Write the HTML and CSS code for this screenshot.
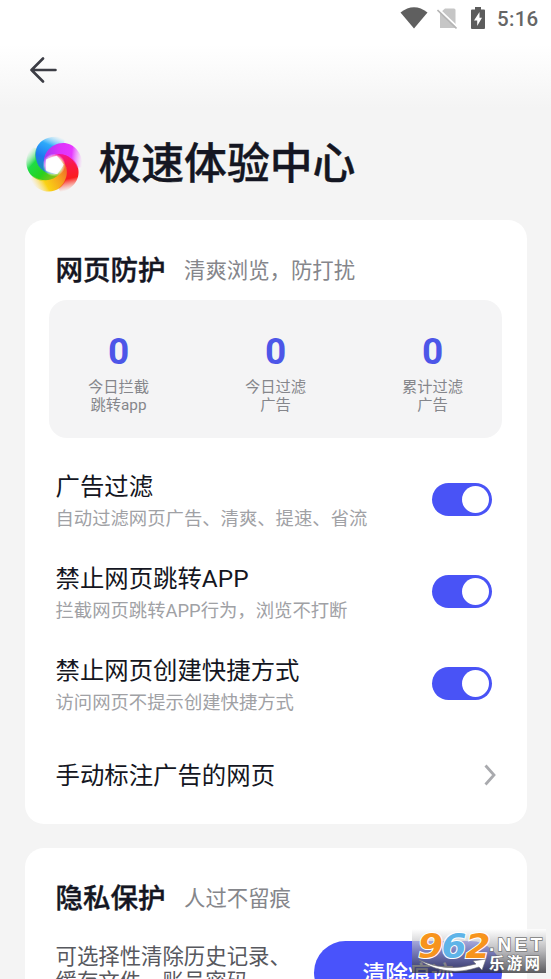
FILE: index.html
```html
<!DOCTYPE html>
<html lang="zh-CN">
<head>
    <meta charset="utf-8">
    <title>极速体验中心</title>
    <link rel="stylesheet" href="styles.css">
</head>
<body>
    <div class="status-bar">
        <svg class="wifi" width="28" height="22" viewBox="0 0 28 22"><path d="M0.500 5.500Q14-5 27.500 5.500L14 21.500Z" fill="#5f5f5f"/></svg>
        <svg class="sim" width="20" height="22" viewBox="0 0 20 22">
            <path d="M8 0.500H17Q18.500 0.500 18.500 2V20H3V5Z" fill="#c6c6c6"/>
            <path d="M1.500 1L20.500 19" stroke="#fff" stroke-width="2"/>
            <path d="M0.500 2L19.500 20.500" stroke="#b5b5b5" stroke-width="1.600"/>
        </svg>
        <svg class="battery" width="14" height="22" viewBox="0 0 14 22">
            <path d="M4 0H10V2.500H13Q14 2.500 14 3.500V21Q14 22 13 22H1Q0 22 0 21V3.500Q0 2.500 1 2.500H4Z" fill="#5c5c5c"/>
            <path d="M8.500 5L3 13.500H6.200V19L11 10.800H8.500Z" fill="#fff"/>
        </svg>
        <span class="time">5:16</span>
    </div>

    <div class="nav">
        <svg width="28" height="26" viewBox="0 0 28 26" fill="none" stroke="#3c3d45" stroke-width="2.600" stroke-linecap="round" stroke-linejoin="round">
            <path d="M14 1.500L2.500 13L14 24.500M2.500 13H26.500"/>
        </svg>
    </div>

    <div class="page-title">
        <svg class="logo" width="60" height="60" viewBox="-30 -30 60 60">
            <defs>
                <linearGradient id="magenta" gradientUnits="userSpaceOnUse" x1="-10" y1="-4" x2="28" y2="0"><stop offset="0" stop-color="#a03cf0"/><stop offset=".35" stop-color="#dc32fa"/><stop offset=".7" stop-color="#e638ff"/><stop offset="1" stop-color="#f08cff" stop-opacity="0"/></linearGradient>
                <linearGradient id="red" gradientUnits="userSpaceOnUse" x1="-10" y1="-4" x2="28" y2="0"><stop offset="0" stop-color="#f514a0"/><stop offset=".35" stop-color="#fa1946"/><stop offset=".7" stop-color="#fa1e1e"/><stop offset="1" stop-color="#ff6e50" stop-opacity="0"/></linearGradient>
                <linearGradient id="yellow" gradientUnits="userSpaceOnUse" x1="-10" y1="-4" x2="28" y2="0"><stop offset="0" stop-color="#f06428"/><stop offset=".35" stop-color="#f5a51e"/><stop offset=".7" stop-color="#fad214"/><stop offset="1" stop-color="#ffdc64" stop-opacity="0"/></linearGradient>
                <linearGradient id="green" gradientUnits="userSpaceOnUse" x1="-10" y1="-4" x2="28" y2="0"><stop offset="0" stop-color="#96be14"/><stop offset=".35" stop-color="#28d21e"/><stop offset=".7" stop-color="#1edc46"/><stop offset="1" stop-color="#82eba0" stop-opacity="0"/></linearGradient>
                <linearGradient id="blue" gradientUnits="userSpaceOnUse" x1="-10" y1="-4" x2="28" y2="0"><stop offset="0" stop-color="#1e8cb4"/><stop offset=".35" stop-color="#1e78f0"/><stop offset=".7" stop-color="#2daafa"/><stop offset="1" stop-color="#6ed2ff" stop-opacity="0"/></linearGradient>
                <radialGradient id="core"><stop offset=".6" stop-color="#fff"/><stop offset="1" stop-color="#fff" stop-opacity="0"/></radialGradient>
                <path id="blade" d="M-8 6C-15-10-3-22 9-22C20-22 29-12 28.500 2L23.400 3C19.500-9.200 4.700-16.700-8-5.300Z"/>
            </defs>
            <use href="#blade" fill="url(#blue)" transform="rotate(288)"/>
            <use href="#blade" fill="url(#green)" transform="rotate(216)"/>
            <use href="#blade" fill="url(#yellow)" transform="rotate(144)"/>
            <use href="#blade" fill="url(#red)" transform="rotate(72)"/>
            <use href="#blade" fill="url(#magenta)"/>
            <circle r="11.500" fill="url(#core)"/>
        </svg>
        <h1>极速体验中心</h1>
    </div>

    <div class="card">
        <div class="card-header">
            <h2>网页防护</h2>
            <span>清爽浏览，防打扰</span>
        </div>
        <div class="stats">
            <div class="stat-item">
                <div class="stat-number">0</div>
                <div class="stat-label">今日拦截<br>跳转app</div>
            </div>
            <div class="stat-item">
                <div class="stat-number">0</div>
                <div class="stat-label">今日过滤<br>广告</div>
            </div>
            <div class="stat-item">
                <div class="stat-number">0</div>
                <div class="stat-label">累计过滤<br>广告</div>
            </div>
        </div>
        <div class="settings">
            <div class="setting">
                <div class="setting-text">
                    <h3>广告过滤</h3>
                    <p>自动过滤网页广告、清爽、提速、省流</p>
                </div>
                <div class="toggle"><div class="toggle-slider"></div></div>
            </div>
            <div class="setting">
                <div class="setting-text">
                    <h3>禁止网页跳转APP</h3>
                    <p>拦截网页跳转APP行为，浏览不打断</p>
                </div>
                <div class="toggle"><div class="toggle-slider"></div></div>
            </div>
            <div class="setting">
                <div class="setting-text">
                    <h3>禁止网页创建快捷方式</h3>
                    <p>访问网页不提示创建快捷方式</p>
                </div>
                <div class="toggle"><div class="toggle-slider"></div></div>
            </div>
            <div class="setting">
                <h3 class="setting-link">手动标注广告的网页</h3>
                <svg class="chevron" width="12" height="22" viewBox="0 0 12 22" fill="none" stroke="#a9aaae" stroke-width="2.800"><path d="M1.500 1.500L10 11L1.500 20.500"/></svg>
            </div>
        </div>
    </div>

    <div class="card privacy">
        <div class="card-header">
            <h2>隐私保护</h2>
            <span>人过不留痕</span>
        </div>
        <div class="privacy-row">
            <p>可选择性清除历史记录、缓存文件、账号密码</p>
            <button class="btn">清除痕迹</button>
        </div>
    </div>

    <div class="watermark">
        <svg width="134" height="44" viewBox="0 0 134 44">
            <g class="mark-number">
                <text x="6" y="28.500" textLength="25" lengthAdjust="spacingAndGlyphs">9</text>
                <text class="mark-blue" x="29.500" y="28.500" textLength="25" lengthAdjust="spacingAndGlyphs">6</text>
                <text x="53.500" y="28.500" textLength="25" lengthAdjust="spacingAndGlyphs">2</text>
            </g>
            <text class="mark-net" x="77" y="22" textLength="53">.NET</text>
            <path d="M7 31Q34 44 64 35L61 32L74 30L70 41L67 38Q34 49 7 31Z" fill="#fff" stroke="#777" stroke-width=".6"/>
            <text class="mark-name" x="77" y="40" textLength="51">乐游网</text>
        </svg>
    </div>
</body>
</html>
```
FILE: styles.css
```css
* {
    box-sizing: border-box;
    margin: 0;
    padding: 0;
}

body {
    width: 551px;
    height: 979px;
    overflow: hidden;
    position: relative;
    font-family: Roboto, "Noto Sans CJK SC", sans-serif;
    background: #f4f4f4 linear-gradient(#fff 45px, #f4f4f4 108px) no-repeat;
    color: #141622;
}

.status-bar {
    height: 40px;
    padding: 7px 12px 0 400px;
    display: flex;
    align-items: flex-start;
}

.sim {
    margin: 1px 0 0 9px;
}

.battery {
    margin: 0 0 0 14px;
}

.time {
    margin-left: 12px;
    font-size: 20.5px;
    font-weight: 500;
    line-height: 24px;
    letter-spacing: 0.3px;
    color: #666;
}

.nav {
    height: 82px;
    padding: 17px 0 0 29px;
}

.page-title {
    height: 98px;
    padding: 12px 0 0 24px;
    display: flex;
}

.logo {
    margin-top: 1px;
}

.page-title h1 {
    margin-left: 14.5px;
    font-size: 42.8px;
    font-weight: 500;
    line-height: 60px;
    -webkit-text-stroke: 0.4px #141622;
}

.card {
    width: 502px;
    height: 604px;
    margin: 0 0 24px 24.5px;
    padding: 0 24.5px;
    background: white;
    border-radius: 19px;
}

.privacy {
    height: 131px;
    margin-bottom: 0;
    border-radius: 19px 19px 0 0;
    overflow: hidden;
}

.card-header {
    height: 80px;
    padding: 22px 0 0 6.5px;
    display: flex;
    align-items: center;
    line-height: 40px;
}

.card-header h2 {
    font-size: 27.5px;
    font-weight: 500;
    -webkit-text-stroke: 0.4px #141622;
}

.card-header span {
    margin-left: 18.5px;
    font-size: 21.4px;
    color: #85868b;
}

.stats {
    height: 138px;
    padding-top: 30px;
    display: flex;
    justify-content: space-between;
    background: #f4f4f5;
    border-radius: 18px;
}

.stat-item {
    width: 139px;
    text-align: center;
}

.stat-number {
    font-size: 37px;
    font-weight: 700;
    line-height: 44px;
    color: #4d56e8;
}

.stat-label {
    margin-top: 4px;
    font-size: 15.3px;
    line-height: 18px;
    color: #85868b;
}

.settings {
    padding: 15px 10px 0 6.5px;
}

.setting {
    height: 92px;
    display: flex;
    align-items: center;
    justify-content: space-between;
}

.setting-text {
    padding-top: 6px;
}

.setting-link {
    padding-top: 2px;
}

.setting h3 {
    font-size: 24.4px;
    font-weight: 400;
    line-height: 34px;
}

.setting p {
    font-size: 18.35px;
    line-height: 30px;
    color: #a0a1a5;
}

.toggle {
    width: 60px;
    height: 33px;
    padding: 3px;
    display: flex;
    justify-content: flex-end;
    background: #4953f6;
    border-radius: 17px;
}

.toggle-slider {
    width: 27px;
    height: 27px;
    background: white;
    border-radius: 50%;
}

.chevron {
    margin-right: -4px;
}

.privacy-row {
    display: flex;
    justify-content: space-between;
    padding: 13px 0 0 6.5px;
}

.privacy-row p {
    width: 240px;
    padding-top: 3px;
    font-size: 21.4px;
    line-height: 25px;
    color: #57585e;
}

.btn {
    width: 188px;
    height: 63px;
    border: none;
    border-radius: 32px;
    background: #4953fb;
    color: white;
    font-family: inherit;
    font-size: 22.8px;
    font-weight: 500;
}

.watermark {
    position: absolute;
    left: 412px;
    top: 929px;
    width: 134px;
    height: 44px;
    background: linear-gradient(rgba(255, 255, 255, 0.8), rgba(150, 150, 155, 0.65) 50%, rgba(40, 40, 45, 0.75));
}

.mark-number {
    font: italic 700 34px "DejaVu Sans", sans-serif;
    fill: #f7941d;
    stroke: white;
    stroke-width: 2px;
    paint-order: stroke;
}

.mark-blue {
    fill: #5fb4e8;
}

.mark-net {
    font: 700 19px "Liberation Sans", sans-serif;
    fill: white;
    stroke: #777;
    stroke-width: 1.5px;
    paint-order: stroke;
}

.mark-name {
    font: 700 15.5px "Noto Sans CJK SC", sans-serif;
    fill: white;
    stroke: #666;
    stroke-width: 1px;
    paint-order: stroke;
}
```
